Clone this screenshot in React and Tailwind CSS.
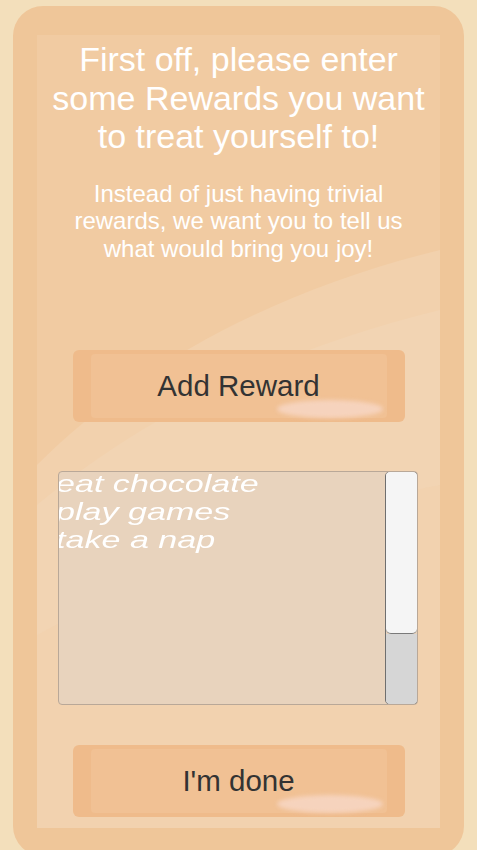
export default function App() {
  const rewards = ['eat chocolate', 'play games', 'take a nap']

  return (
    <div className="w-[477px] h-[850px] overflow-hidden bg-[#f3dfbb] pt-[6px] px-[13px] font-['Liberation_Sans',Arial,sans-serif]">
      <div className="h-[850px] rounded-[30px] bg-[#efc699] pt-[29px] px-[24px]">
        <div className="relative h-[793px] bg-[#f1cba2] overflow-hidden">
          <svg
            className="absolute inset-0 w-full h-full"
            viewBox="0 0 403 793"
            preserveAspectRatio="none"
          >
            <path
              d="M0 430 C 90 340, 220 260, 403 215 L 403 793 L 0 793 Z"
              fill="#f2d1ad"
            />
            <path
              d="M0 470 C 120 370, 260 310, 403 275 L 403 793 L 0 793 Z"
              fill="#f2d4b3"
            />
            <path
              d="M0 600 C 150 520, 300 470, 403 450 L 403 793 L 0 793 Z"
              fill="#f1d0ac"
              opacity="0.6"
            />
          </svg>

          <div className="relative flex flex-col items-center">
            <h1 className="mt-[5px] text-center text-white text-[34px] leading-[38.5px] font-normal">
              First off, please enter
              <br />
              some Rewards you want
              <br />
              to treat yourself to!
            </h1>
            <p className="mt-[24px] text-center text-white text-[24px] leading-[27.5px]">
              Instead of just having trivial
              <br />
              rewards, we want you to tell us
              <br />
              what would bring you joy!
            </p>

            <GlossButton className="mt-[88px]" label="Add Reward" />

            <div className="mt-[49px] ml-[-1px] w-[360px] h-[234px] flex rounded-[4px] border border-[#b9a898] bg-[#e8d3bd] overflow-hidden">
              <ul className="flex-1 overflow-hidden -mt-[2px]">
                {rewards.map((r) => (
                  <li
                    key={r}
                    className="h-[28px] ml-[-3px] whitespace-nowrap text-white italic text-[24px] leading-[28px] origin-left scale-x-[1.42]"
                  >
                    {r}
                  </li>
                ))}
              </ul>
              <div className="w-[33px] -my-px -mr-px flex flex-col rounded-[5px] border border-[#6f6f6f] overflow-hidden">
                <div className="h-[162px] bg-[#f5f5f5] border-b border-[#7a7a7a] rounded-b-[5px]" />
                <div className="flex-1 bg-[#d6d6d6]" />
              </div>
            </div>

            <GlossButton className="mt-[40px]" label="I'm done" />
          </div>
        </div>
      </div>
    </div>
  )
}

function GlossButton({ label, className }) {
  return (
    <button
      className={`relative w-[332px] h-[72px] rounded-[6px] bg-[#efbb8b] overflow-hidden ${className}`}
    >
      <div className="absolute inset-y-[4px] left-[18px] right-[18px] bg-[#f1c194] rounded-[4px]" />
      <div className="absolute bottom-[4px] right-[22px] w-[106px] h-[18px] rounded-[50%] bg-[#f6d3bd] blur-[2px]" />
      <span className="relative text-[#333333] text-[29.5px] leading-[72px]">
        {label}
      </span>
    </button>
  )
}
